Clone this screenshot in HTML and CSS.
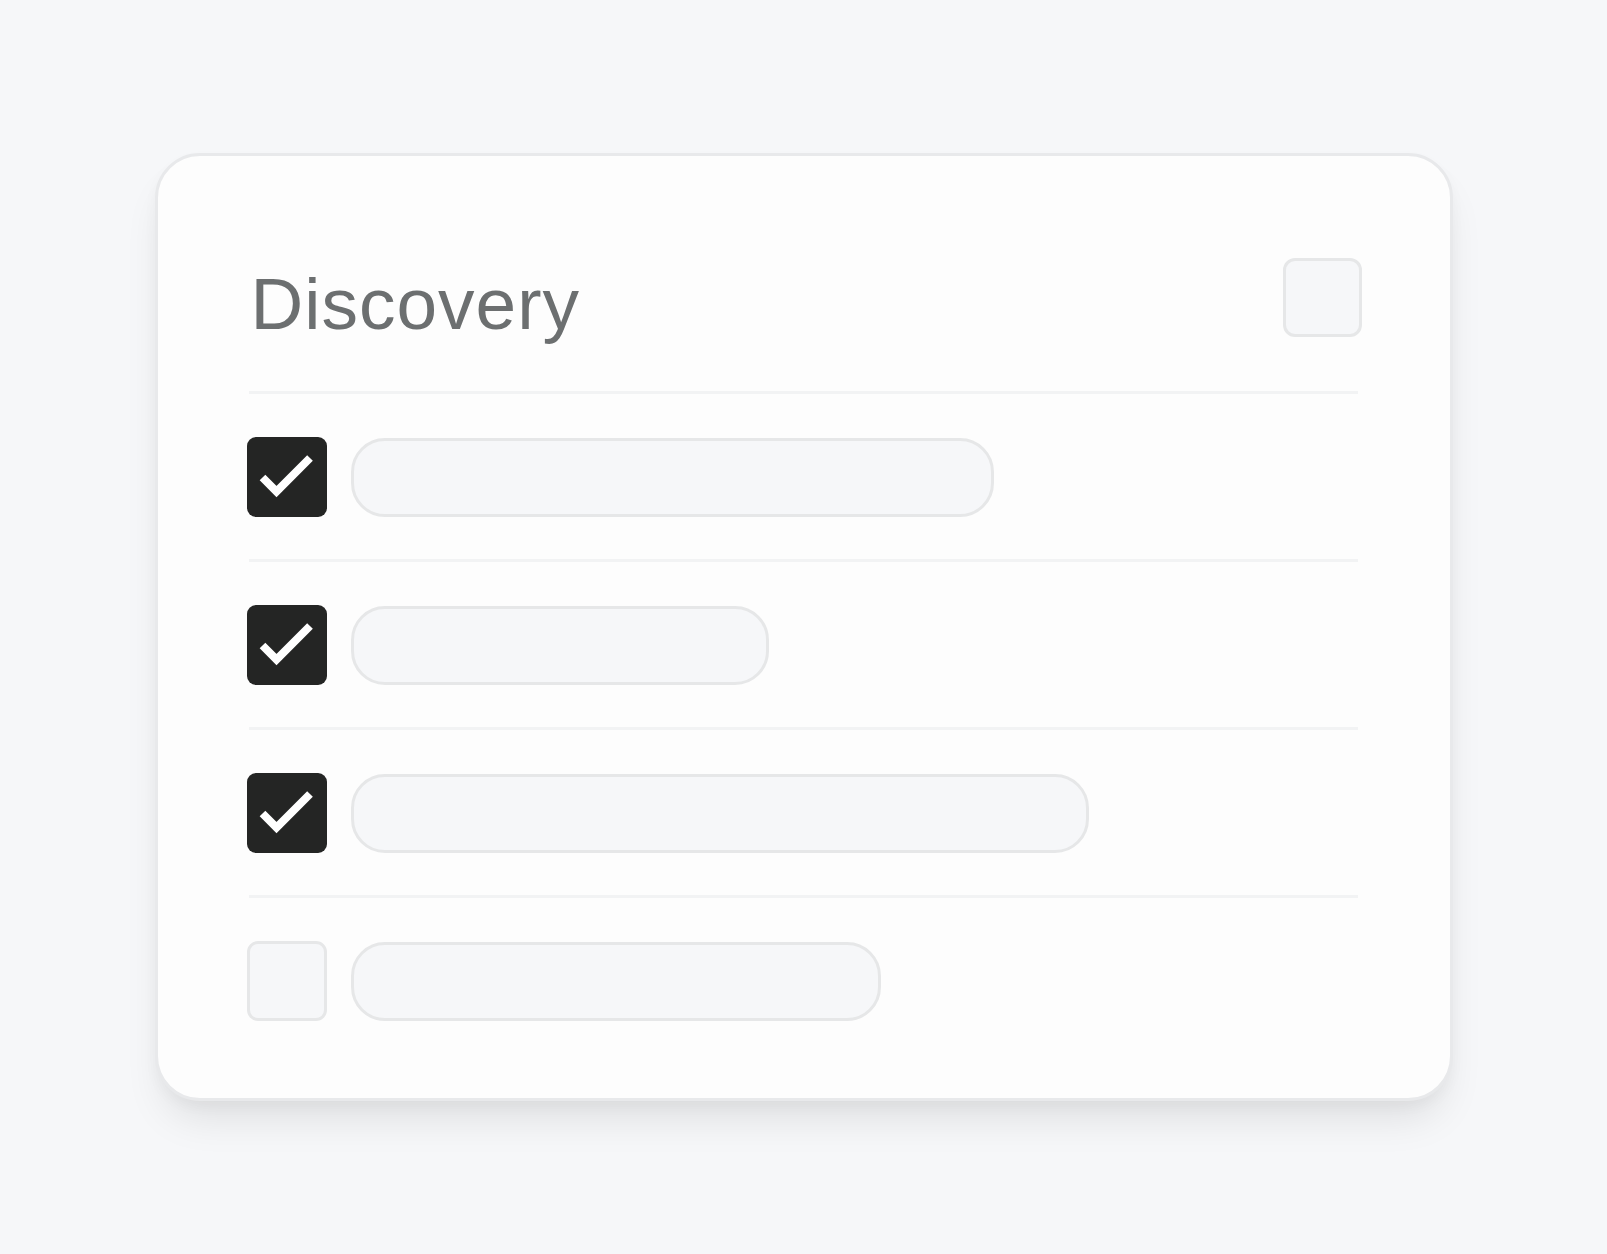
FILE: index.html
```html
<!DOCTYPE html>
<html lang="en">
<head>
<meta charset="utf-8">
<title>Discovery</title>
<link rel="stylesheet" href="styles.css">
</head>
<body>
<main class="card">
  <header class="card-header">
    <h1 class="title">Discovery</h1>
    <div class="header-box"></div>
  </header>
  <ul class="list">
    <li class="item">
      <span class="check checked"><svg viewBox="0 0 80 80" width="80" height="80"><polyline points="15.5,40.5 29.5,54.5 63,21" /></svg></span>
      <span class="pill" style="width:643px"></span>
    </li>
    <li class="item">
      <span class="check checked"><svg viewBox="0 0 80 80" width="80" height="80"><polyline points="15.5,40.5 29.5,54.5 63,21" /></svg></span>
      <span class="pill" style="width:418px"></span>
    </li>
    <li class="item">
      <span class="check checked"><svg viewBox="0 0 80 80" width="80" height="80"><polyline points="15.5,40.5 29.5,54.5 63,21" /></svg></span>
      <span class="pill" style="width:738px"></span>
    </li>
    <li class="item">
      <span class="check empty"></span>
      <span class="pill" style="width:530px"></span>
    </li>
  </ul>
</main>
</body>
</html>
```

FILE: styles.css
```css
* { box-sizing: border-box; }

html, body {
  margin: 0;
  padding: 0;
}

body {
  background: #f6f7f9;
  min-height: 100vh;
  display: flex;
  align-items: center;
  justify-content: center;
  font-family: "Liberation Sans", Arial, sans-serif;
}

.card {
  width: 1298px;
  height: 948px;
  background: #fdfdfd;
  border: 3px solid #e8e9eb;
  border-radius: 45px;
  padding: 102px 88px 0 89px;
  box-shadow: 0 26px 40px -10px rgba(0, 0, 0, 0.10), 0 6px 14px rgba(0, 0, 0, 0.03);
}

.card-header {
  display: flex;
  justify-content: space-between;
  align-items: flex-start;
  margin-bottom: 51px;
}

.title {
  margin: 9px 0 0 4px;
  font-size: 73px;
  line-height: 1;
  font-weight: 400;
  letter-spacing: 1px;
  color: #6c6f70;
}

.header-box {
  width: 79px;
  height: 79px;
  border: 3px solid #e6e7e8;
  border-radius: 12px;
  background: #f6f7f9;
}

.list {
  list-style: none;
  margin: 0;
  padding: 0;
}

.item {
  display: flex;
  align-items: center;
  gap: 24px;
  padding: 46px 0 42px;
  background-image: linear-gradient(#f2f3f4, #f2f3f4);
  background-repeat: no-repeat;
  background-size: calc(100% - 6px) 3px;
  background-position: 2px 0;
}

.check {
  width: 80px;
  height: 80px;
  flex: none;
  display: block;
  border-radius: 9px;
}

.check.checked {
  background: #242524;
}

.check svg {
  display: block;
}

.check polyline {
  fill: none;
  stroke: #ffffff;
  stroke-width: 8;
  stroke-linecap: butt;
  stroke-linejoin: miter;
}

.check.empty {
  background: #f6f7f9;
  border: 3px solid #e6e7e8;
  border-radius: 11px;
}

.pill {
  display: block;
  height: 79px;
  background: #f6f7f9;
  border: 3px solid #e6e7e8;
  border-radius: 34px;
}
```
